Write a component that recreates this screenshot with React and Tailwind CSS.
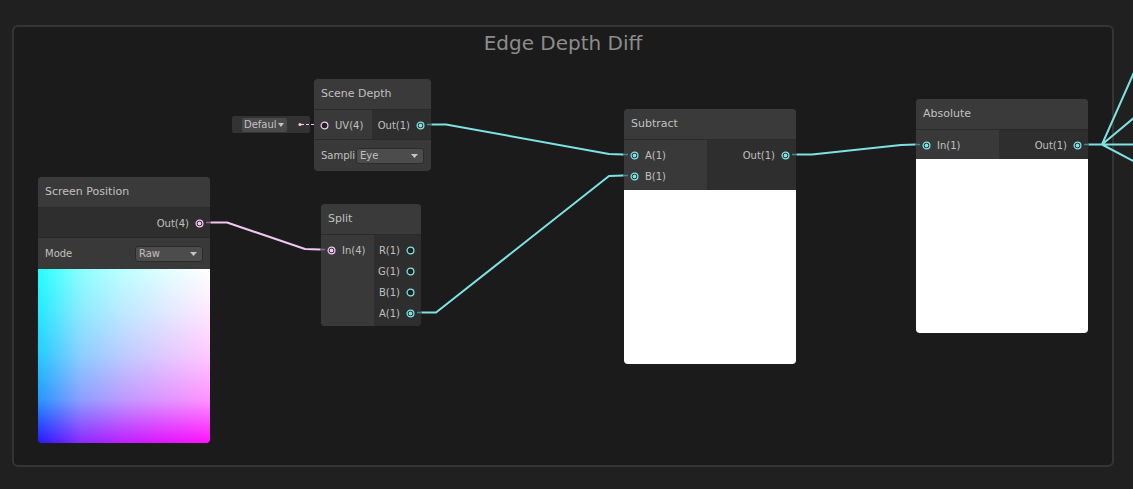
import React from "react";

const CYAN = "#7ee2e5";
const PINK = "#f2c6f0";

function Dot({ color, filled }) {
  return (
    <svg width="9" height="9" viewBox="0 0 9 9" className="shrink-0">
      <circle cx="4.5" cy="4.5" r="3.4" fill="#222" stroke={color} strokeWidth="1.3" />
      {filled && <circle cx="4.5" cy="4.5" r="1.9" fill={color} />}
    </svg>
  );
}

function InPort({ label, color, filled }) {
  return (
    <div className="h-[21px] flex items-center pl-[6px] gap-[6px]">
      <Dot color={color} filled={filled} />
      <span>{label}</span>
    </div>
  );
}

function OutPort({ label, color, filled }) {
  return (
    <div className="h-[21px] flex items-center justify-end pr-[6px] gap-[6px]">
      <span>{label}</span>
      <Dot color={color} filled={filled} />
    </div>
  );
}

function Dropdown({ value, className }) {
  return (
    <div className={`h-[16px] bg-[#4c4c4c] border border-[#2c2c2c] rounded-[3px] flex items-center justify-between pl-[3px] pr-[5px] ${className}`}>
      <span>{value}</span>
      <svg width="7" height="4" viewBox="0 0 7 4">
        <path d="M0 0h7L3.5 4z" fill="#c4c4c4" />
      </svg>
    </div>
  );
}

function Node({ className, title, children }) {
  return (
    <div className={`absolute rounded-[5px] overflow-hidden border border-[#1c1c1c] bg-[#393939] text-[10px] text-[#c0c0c0] ${className}`}>
      <div className="h-[31px] flex items-center px-[7px] text-[11px] bg-[#3a3a3a] border-b border-[#2a2a2a]">
        {title}
      </div>
      {children}
    </div>
  );
}

export default function App() {
  return (
    <div className="relative w-[1133px] h-[489px] overflow-hidden bg-[#202020] font-['DejaVu_Sans',sans-serif]">
      {/* group */}
      <div className="absolute left-[12px] top-[25px] w-[1102px] h-[442px] rounded-[6px] border-2 border-[#353535] bg-[#1b1b1b] flex justify-center">
        <div className="pt-[4px] text-[20px] text-[#8c8c8c] leading-[24px]">Edge Depth Diff</div>
      </div>

      {/* inline default for UV */}
      <div className="absolute left-[232px] top-[116px] w-[78px] h-[17px] rounded-[2px] bg-[#333333] flex items-center pl-[10px] text-[10px] text-[#c0c0c0]">
        <div className="h-[14px] w-[45px] bg-[#4a4a4a] rounded-[2px] flex items-center justify-between pl-[2px] pr-[3px]">
          <span>Defaul</span>
          <svg width="6" height="4" viewBox="0 0 6 4">
            <path d="M0 0h6L3 4z" fill="#c4c4c4" />
          </svg>
        </div>
      </div>

      <Node className="left-[313px] top-[78px] w-[119px]" title="Scene Depth">
        <div className="flex">
          <div className="w-[58px] pt-[5px] pb-[3px] bg-[#393939]">
            <InPort label="UV(4)" color={PINK} />
          </div>
          <div className="flex-1 pt-[5px] pb-[3px] bg-[#2e2e2e]">
            <OutPort label="Out(1)" color={CYAN} filled />
          </div>
        </div>
        <div className="h-[32px] flex items-center px-[7px] border-t border-[#2a2a2a]">
          <div className="w-[35px] whitespace-nowrap">Sampli</div>
          <Dropdown value="Eye" className="w-[68px] ml-auto" />
        </div>
      </Node>

      <Node className="left-[37px] top-[176px] w-[174px]" title="Screen Position">
        <div className="pt-[5px] pb-[3px] bg-[#2e2e2e]">
          <OutPort label="Out(4)" color={PINK} filled />
        </div>
        <div className="h-[32px] flex items-center px-[7px] border-t border-[#2a2a2a]">
          <span>Mode</span>
          <Dropdown value="Raw" className="w-[68px] ml-auto" />
        </div>
        <div className="h-[174px] bg-[linear-gradient(to_bottom,#00ff00,rgb(0,230,0)_25%,rgb(0,196,0)_50%,rgb(0,140,0)_75%,#000000),linear-gradient(to_right,#2418ff,rgb(140,40,255)_25%,rgb(190,30,255)_50%,rgb(226,20,255)_75%,#ff10ff)] bg-blend-screen" />
      </Node>

      <Node className="left-[320px] top-[203px] w-[102px]" title="Split">
        <div className="flex">
          <div className="w-[53px] pt-[5px] pb-[2px] bg-[#393939]">
            <InPort label="In(4)" color={PINK} filled />
          </div>
          <div className="flex-1 pt-[5px] pb-[2px] bg-[#2e2e2e]">
            <OutPort label="R(1)" color={CYAN} />
            <OutPort label="G(1)" color={CYAN} />
            <OutPort label="B(1)" color={CYAN} />
            <OutPort label="A(1)" color={CYAN} filled />
          </div>
        </div>
      </Node>

      <Node className="left-[623px] top-[108px] w-[174px]" title="Subtract">
        <div className="flex">
          <div className="w-[83px] pt-[5px] pb-[3px] bg-[#393939]">
            <InPort label="A(1)" color={CYAN} filled />
            <InPort label="B(1)" color={CYAN} filled />
          </div>
          <div className="flex-1 pt-[5px] pb-[3px] bg-[#2e2e2e]">
            <OutPort label="Out(1)" color={CYAN} filled />
          </div>
        </div>
        <div className="h-[174px] bg-white" />
      </Node>

      <Node className="left-[915px] top-[98px] w-[174px]" title="Absolute">
        <div className="flex">
          <div className="w-[83px] pt-[5px] pb-[3px] bg-[#393939]">
            <InPort label="In(1)" color={CYAN} filled />
          </div>
          <div className="flex-1 pt-[5px] pb-[3px] bg-[#2e2e2e]">
            <OutPort label="Out(1)" color={CYAN} filled />
          </div>
        </div>
        <div className="h-[174px] bg-white" />
      </Node>

      {/* wires */}
      <svg className="absolute left-0 top-0 pointer-events-none" width="1133" height="489" viewBox="0 0 1133 489">
        <g fill="none" strokeWidth="2" strokeLinejoin="round" strokeLinecap="round">
          <path d="M432 124.5 L446 124.5 L609 154 L623 154.5" stroke={CYAN} />
          <path d="M211 222.5 L227 222.5 L305 249 L320 249.5" stroke={PINK} />
          <path d="M422 312.5 L436 312.5 L609 176 L623 175.5" stroke={CYAN} />
          <path d="M797 154.5 L812 154.5 L901 145 L915 144.5" stroke={CYAN} />
          <path d="M1089 144.5 L1102 144.5 L1135 70 M1102 144.5 L1135 117 M1102 144.5 L1135 144.5 M1102 144.5 L1135 162" stroke={CYAN} />
        </g>
        <g strokeWidth="1.5" stroke="#4f8486">
          <path d="M427 124.5 H432 M792 154.5 H797 M1084 144.5 H1089 M417 312.5 H422 M623 154.5 H628 M623 175.5 H628 M915 144.5 H920" />
        </g>
        <path d="M206 222.5 H211 M320 249.5 H325" stroke="#8a6e89" strokeWidth="1.5" />
        <path d="M301 124.5 H315" stroke={PINK} strokeWidth="1" strokeDasharray="3 2" />
        <circle cx="300" cy="124.5" r="1.6" fill={PINK} />
      </svg>
    </div>
  );
}
